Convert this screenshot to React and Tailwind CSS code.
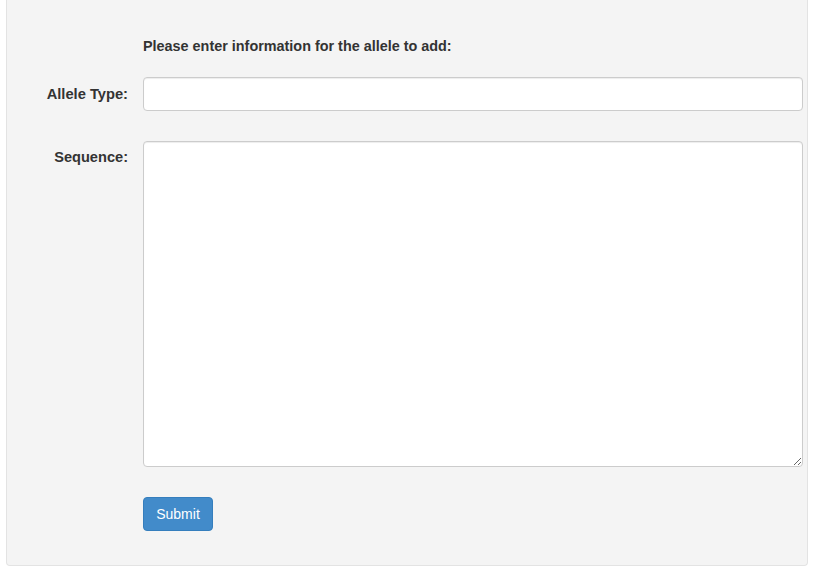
export default function App() {
  return (
    <div className="w-[814px] h-[569px] bg-white overflow-hidden" style={{ fontFamily: '"Liberation Sans", Arial, sans-serif' }}>
      <div className="ml-[6px] w-[802px] h-[566px] bg-[#f4f4f4] border-x border-b border-[#e3e3e3] rounded-b-[4px] text-[14px] text-[#333]">
        <div className="pt-[36px] pl-[136px] font-bold leading-[20px] text-[14.4px]">Please enter information for the allele to add:</div>
        <div className="mt-[21px] flex items-start">
          <label className="w-[121px] text-right font-bold leading-[20px] pt-[7px] text-[14.7px]">Allele Type:</label>
          <input type="text" className="ml-[15px] w-[660px] h-[34px] bg-white border border-[#ccc] rounded-[4px] shadow-[inset_0_1px_1px_rgba(0,0,0,0.075)] px-3 outline-none" />
        </div>
        <div className="mt-[30px] flex items-start">
          <label className="w-[121px] text-right font-bold leading-[20px] pt-[6px] text-[14.6px]">Sequence:</label>
          <textarea className="ml-[15px] w-[660px] h-[326px] bg-white border border-[#ccc] rounded-[4px] shadow-[inset_0_1px_1px_rgba(0,0,0,0.075)] px-3 py-[6px] outline-none block" />
        </div>
        <div className="mt-[30px] pl-[136px]">
          <button className="w-[70px] h-[34px] bg-[#428bca] border border-[#357ebd] rounded-[4px] text-white text-[14px] leading-[20px]">Submit</button>
        </div>
      </div>
    </div>
  );
}
